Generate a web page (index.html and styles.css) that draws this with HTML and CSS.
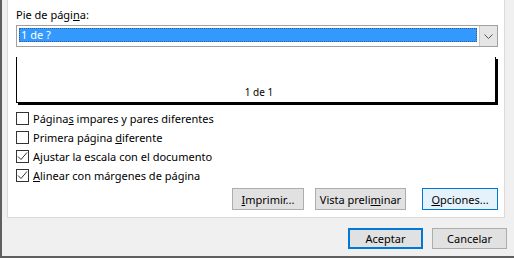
FILE: index.html
```html
<!DOCTYPE html>
<html lang="es">
<head>
    <meta charset="UTF-8">
    <title>Encabezado y pie de página</title>
    <link rel="stylesheet" href="styles.css">
</head>
<body>

<div class="ventana">
    <div class="panel">
        <label class="etiqueta">Pie de pági<u>n</u>a:</label>
        <div class="combo">
            <div class="combo-valor"><span>1 de ?</span></div>
            <div class="combo-flecha">
                <svg width="9" height="5" viewBox="0 0 9 5"><path d="M0.5 0.5 L4.5 4.5 L8.5 0.5" fill="none" stroke="#555" stroke-width="1"/></svg>
            </div>
        </div>

        <div class="vista">
            <div class="pagina"><span>1 de 1</span></div>
        </div>

        <ul class="opciones">
            <li><span class="casilla"></span><span>Página<u>s</u> impares y pares diferentes</span></li>
            <li><span class="casilla"></span><span>Primera página <u>d</u>iferente</span></li>
            <li><span class="casilla"><svg width="11" height="11" viewBox="0 0 11 11"><path d="M1 5.5 L4 8.5 L10 1.5" fill="none" stroke="#333" stroke-width="1"/></svg></span><span>A<u>j</u>ustar la escala con el documento</span></li>
            <li><span class="casilla"><svg width="11" height="11" viewBox="0 0 11 11"><path d="M1 5.5 L4 8.5 L10 1.5" fill="none" stroke="#333" stroke-width="1"/></svg></span><span><u>A</u>linear con márgenes de página</span></li>
        </ul>

        <div class="acciones">
            <button class="boton ancho-imprimir"><u>I</u>mprimir...</button>
            <button class="boton ancho-vista">Vista preli<u>m</u>inar</button>
            <button class="boton activo ancho-opciones"><u>O</u>pciones...</button>
        </div>
    </div>

    <div class="pie">
        <button class="boton defecto">Aceptar</button>
        <button class="boton">Cancelar</button>
    </div>
</div>

</body>
</html>
```

FILE: styles.css
```css
body {
    margin: 0;
    padding: 0;
    font-family: "Noto Sans", Arial, sans-serif;
    font-size: 11px;
    color: #000;
    background-color: #f0f0f0;
}
.ventana {
    width: 512px;
    height: 256px;
    border-left: 2px solid #5f5f5f;
    border-bottom: 2px solid #5f5f5f;
    background-color: #f0f0f0;
    overflow: hidden;
}
.panel {
    margin-left: 5px;
    margin-top: -1px;
    width: 482px;
    height: 208px;
    padding: 0 6px 9px 8px;
    background-color: #ffffff;
    border: 1px solid #dadada;
}
.etiqueta {
    display: block;
    height: 16px;
    padding-top: 7px;
    line-height: 16px;
}
.combo {
    display: flex;
    margin-top: 2px;
    height: 20px;
    border: 1px solid #a0a0a0;
}
.combo-valor {
    flex: 1;
    padding: 2px;
}
.combo-valor span {
    display: block;
    height: 14px;
    line-height: 14px;
    padding-left: 2px;
    color: #ffffff;
    background-color: #3399ff;
    outline: 1px dotted #3a5f8a;
    outline-offset: -1px;
}
.combo-flecha {
    width: 17px;
    display: flex;
    align-items: center;
    justify-content: center;
    background-color: #e5e5e5;
    border-left: 1px solid #c8c8c8;
}
.vista {
    margin-top: 10px;
    padding-right: 2px;
}
.pagina {
    height: 45px;
    border-left: 1px solid #000;
    border-right: 1px solid #000;
    border-bottom: 1px solid #000;
    box-shadow: 2px 2px 0 #000;
    display: flex;
    align-items: flex-end;
    justify-content: center;
}
.pagina span {
    font-size: 10px;
    line-height: 13px;
    padding-bottom: 3px;
    padding-left: 6px;
}
.opciones {
    list-style: none;
    margin: 6px 0 0 0;
    padding: 0;
}
.opciones li {
    display: flex;
    align-items: center;
    height: 19px;
}
.casilla {
    width: 11px;
    height: 11px;
    border: 1px solid #333333;
    background-color: #ffffff;
    margin-right: 4px;
    display: flex;
}
.acciones {
    display: flex;
    justify-content: flex-end;
    margin-top: 3px;
}
.boton {
    height: 22px;
    padding: 0;
    font-family: "Noto Sans", Arial, sans-serif;
    font-size: 11px;
    color: #000;
    background-color: #e1e1e1;
    border: 1px solid #adadad;
}
.ancho-imprimir {
    width: 72px;
}
.ancho-vista {
    width: 91px;
    margin-left: 11px;
}
.ancho-opciones {
    width: 76px;
    margin-left: 16px;
}
.activo {
    background-color: #e5f1fb;
    border-color: #0078d7;
}
.pie {
    display: flex;
    justify-content: flex-end;
    gap: 9px;
    padding: 10px 7px 0 0;
}
.pie .boton {
    width: 75px;
    height: 21px;
}
.defecto {
    border: 2px solid #0078d7;
}
```
